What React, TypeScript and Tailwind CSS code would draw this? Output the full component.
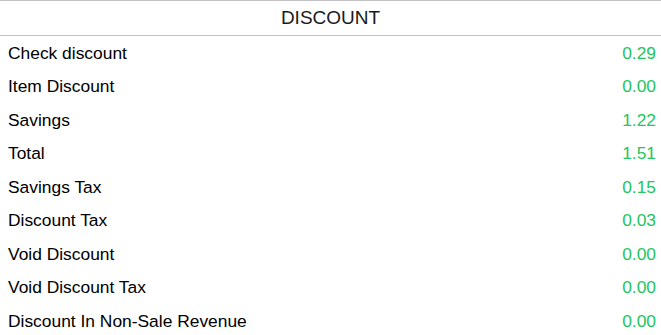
const rows: { label: string; value: string }[] = [
  { label: 'Check discount', value: '0.29' },
  { label: 'Item Discount', value: '0.00' },
  { label: 'Savings', value: '1.22' },
  { label: 'Total', value: '1.51' },
  { label: 'Savings Tax', value: '0.15' },
  { label: 'Discount Tax', value: '0.03' },
  { label: 'Void Discount', value: '0.00' },
  { label: 'Void Discount Tax', value: '0.00' },
  { label: 'Discount In Non-Sale Revenue', value: '0.00' },
]

export default function App() {
  return (
    <div className="h-[335px] w-[661px] overflow-hidden bg-white font-['Liberation_Sans',Arial,sans-serif]">
      <div className="flex h-[36px] items-center justify-center border-y border-[#c4c4c4] text-[19px] text-[#1a1a1a]">
        DISCOUNT
      </div>
      <div>
        {rows.map((row) => (
          <div key={row.label} className="flex h-[33.5px] items-center justify-between pl-2 pr-[5px] text-[17.4px]">
            <span className="text-black">{row.label}</span>
            <span className="text-[#22c55e]">{row.value}</span>
          </div>
        ))}
      </div>
    </div>
  )
}
